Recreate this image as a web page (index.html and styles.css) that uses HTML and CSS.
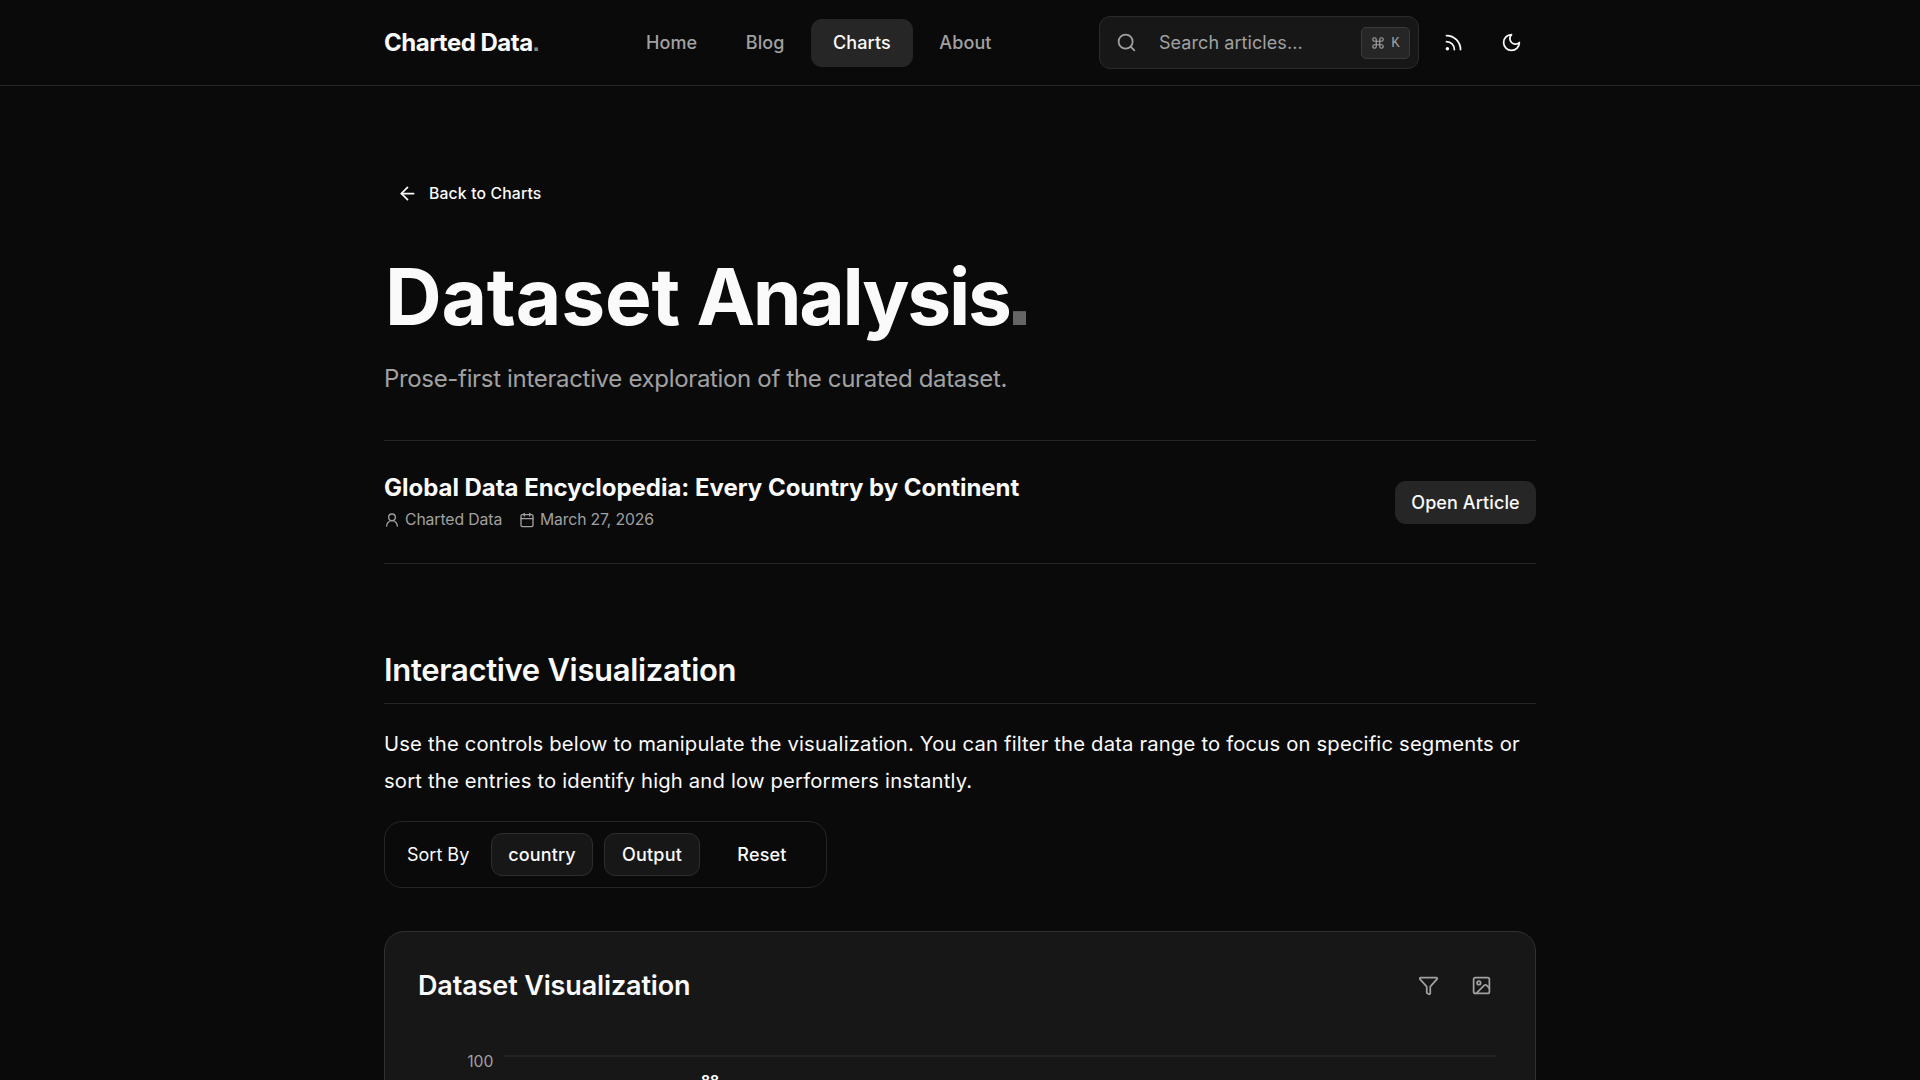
FILE: index.html
```html
<!DOCTYPE html>
<html lang="en">
<head>
    <meta charset="utf-8">
    <title>Dataset Analysis | Charted Data</title>
    <link rel="stylesheet" href="styles.css">
</head>
<body>
    <header class="header">
        <div class="header-inner">
            <a class="logo" href="#">Charted Data<span class="logo-dot">.</span></a>
            <nav class="nav">
                <a href="#">Home</a>
                <a href="#">Blog</a>
                <a href="#" class="active">Charts</a>
                <a href="#">About</a>
            </nav>
            <div class="actions">
                <div class="search">
                    <svg class="icon search-icon" viewBox="0 0 24 24"><circle cx="11" cy="11" r="8"/><path d="m21 21-4.3-4.3"/></svg>
                    <span class="search-text">Search articles...</span>
                    <kbd class="kbd">
                        <svg class="icon" viewBox="0 0 24 24"><path d="M15 6v12a3 3 0 1 0 3-3H6a3 3 0 1 0 3 3V6a3 3 0 1 0-3 3h12a3 3 0 1 0-3-3"/></svg>
                        <span>K</span>
                    </kbd>
                </div>
                <a class="icon-btn rss" href="#"><svg class="icon" viewBox="0 0 24 24"><path d="M4 11a9 9 0 0 1 9 9"/><path d="M4 4a16 16 0 0 1 16 16"/><circle cx="5" cy="19" r="1"/></svg></a>
                <a class="icon-btn moon" href="#"><svg class="icon" viewBox="0 0 24 24"><path d="M12 3a6 6 0 0 0 9 9 9 9 0 1 1-9-9Z"/></svg></a>
            </div>
        </div>
    </header>

    <main class="container">
        <a class="back" href="#">
            <svg class="icon" viewBox="0 0 24 24"><path d="m12 19-7-7 7-7"/><path d="M19 12H5"/></svg>
            <span>Back to Charts</span>
        </a>
        <h1>Dataset <span class="tight">Analysis</span><span class="dot">.</span></h1>
        <p class="subtitle">Prose-first interactive exploration of the curated dataset.</p>

        <section class="article">
            <div>
                <h3>Global Data Encyclopedia: Every Country by Continent</h3>
                <div class="meta">
                    <svg class="icon" viewBox="0 0 24 24"><circle cx="12" cy="8" r="5"/><path d="M20 21a8 8 0 0 0-16 0"/></svg>
                    <span class="author">Charted Data</span>
                    <svg class="icon" viewBox="0 0 24 24"><path d="M8 2v4"/><path d="M16 2v4"/><rect width="18" height="18" x="3" y="4" rx="2"/><path d="M3 10h18"/></svg>
                    <span class="date">March 27, 2026</span>
                </div>
            </div>
            <button class="open">Open Article</button>
        </section>

        <h2>Interactive Visualization</h2>
        <p class="intro">Use the controls below to manipulate the visualization. You can filter the data range to focus on specific segments or<br>sort the entries to identify high and low performers instantly.</p>

        <div class="sort">
            <span class="sort-label">Sort By</span>
            <button class="country">country</button>
            <button class="output">Output</button>
            <button class="reset">Reset</button>
        </div>

        <section class="card">
            <div class="card-head">
                <h3>Dataset Visualization</h3>
                <div class="card-tools">
                    <svg class="icon" viewBox="0 0 24 24"><path d="M10 20a1 1 0 0 0 .553.895l2 1A1 1 0 0 0 14 21v-7a2 2 0 0 1 .517-1.341L21.74 4.67A1 1 0 0 0 21 3H3a1 1 0 0 0-.742 1.67l7.225 7.989A2 2 0 0 1 10 14z"/></svg>
                    <svg class="icon" viewBox="0 0 24 24"><rect width="18" height="18" x="3" y="3" rx="2"/><circle cx="9" cy="9" r="2"/><path d="m21 15-3.086-3.086a2 2 0 0 0-2.828 0L6 21"/></svg>
                </div>
            </div>
            <svg class="chart" width="1080" height="300" viewBox="0 0 1080 300">
                <line class="grid" x1="86" y1="22" x2="1078.5" y2="22"/>
                <text class="tick" x="75.5" y="33" text-anchor="end">100</text>
                <text class="value" x="292" y="52" text-anchor="middle">88</text>
            </svg>
        </section>
    </main>
</body>
</html>
```
FILE: styles.css
```css
* {
    box-sizing: border-box;
}
html {
    font-size: 18px;
}
body {
    margin: 0;
    height: 1080px;
    overflow: hidden;
    background: #0a0a0a;
    color: #fafafa;
    font-family: Inter, "Liberation Sans", sans-serif;
}
a {
    color: inherit;
    text-decoration: none;
}
h1, h2, h3, p {
    margin: 0;
}
button {
    font-family: inherit;
    font-size: 18px;
    font-weight: 500;
    color: #fafafa;
    border: 0;
    padding: 0;
    white-space: nowrap;
}
.icon {
    display: block;
    flex: none;
    fill: none;
    stroke: currentColor;
    stroke-width: 2;
    stroke-linecap: round;
    stroke-linejoin: round;
}

.header {
    height: 86px;
    border-bottom: 1px solid #262626;
}
.header-inner {
    width: 1152px;
    height: 85px;
    margin: 0 auto;
    display: flex;
    align-items: center;
    white-space: nowrap;
}
.logo {
    width: 240px;
    font-size: 24px;
    font-weight: 700;
    letter-spacing: -0.5px;
}
.logo-dot {
    color: #8a8a8a;
    font-family: "Liberation Sans", sans-serif;
}
.nav {
    display: flex;
    gap: 4.5px;
    color: #a1a1a1;
    font-size: 18px;
    font-weight: 500;
    letter-spacing: 0.1px;
}
.nav a {
    height: 48px;
    padding: 0 22px;
    display: flex;
    align-items: center;
    border-radius: 11px;
}
.nav .active {
    background: #262626;
    color: #fafafa;
}
.actions {
    margin-left: auto;
    display: flex;
    align-items: center;
}
.search {
    width: 320px;
    height: 53px;
    border: 1px solid #2b2b2b;
    border-radius: 11px;
    background: #171717;
    color: #a1a1a1;
    display: flex;
    align-items: center;
    padding: 0 8px 0 16px;
}
.search-icon {
    width: 21px;
    height: 21px;
}
.search-text {
    margin-left: 22px;
    font-size: 18px;
    letter-spacing: 0.07px;
}
.kbd {
    width: 49px;
    height: 32px;
    margin-left: auto;
    border: 1px solid #3a3a3a;
    border-radius: 5px;
    background: #262626;
    font-family: "Liberation Mono", monospace;
    font-size: 14px;
    display: flex;
    align-items: center;
    justify-content: center;
    gap: 6px;
}
.kbd .icon {
    width: 14px;
    height: 14px;
}
.icon-btn {
    width: 48px;
    display: flex;
    justify-content: center;
}
.icon-btn .icon {
    width: 21px;
    height: 21px;
}
.rss {
    margin-left: 10px;
}
.moon {
    margin: 0 1px 0 10px;
}

.container {
    width: 1152px;
    margin: 0 auto;
}
.back {
    height: 40px;
    margin-top: 87px;
    padding-left: 13px;
    display: flex;
    align-items: center;
    gap: 11px;
    font-size: 15.75px;
    font-weight: 500;
    letter-spacing: 0.15px;
}
.back .icon {
    width: 21px;
    height: 21px;
}
h1 {
    height: 82px;
    margin: 43px 0 0 1px;
    font-size: 78.5px;
    line-height: 82px;
    font-weight: 700;
    letter-spacing: -0.2px;
    word-spacing: -2px;
    white-space: nowrap;
}
.tight {
    letter-spacing: -2.3px;
}
.dot {
    color: #656565;
    font-family: "Liberation Sans", sans-serif;
    font-size: 92px;
    line-height: 0;
    margin-left: -3px;
}
.subtitle {
    margin-top: 22px;
    height: 36px;
    line-height: 37px;
    font-size: 24px;
    letter-spacing: -0.33px;
    color: #a1a1a1;
    white-space: nowrap;
}

.article {
    margin-top: 44px;
    height: 124px;
    border-top: 1px solid #262626;
    border-bottom: 1px solid #262626;
    display: flex;
    align-items: center;
    justify-content: space-between;
    white-space: nowrap;
}
.article h3 {
    margin-top: -1px;
    font-size: 24px;
    line-height: 32px;
    font-weight: 700;
    letter-spacing: -0.03px;
}
.meta {
    margin-top: 5px;
    display: flex;
    align-items: center;
    font-size: 15.75px;
    line-height: 22px;
    letter-spacing: -0.15px;
    color: #a1a1a1;
}
.meta .icon {
    width: 16px;
    height: 16px;
}
.author {
    width: 97px;
    margin: 0 17px 0 5px;
    letter-spacing: -0.1px;
}
.date {
    margin-left: 5px;
}
.open {
    width: 141px;
    height: 43px;
    border-radius: 11px;
    background: #262626;
    letter-spacing: 0.1px;
}

h2 {
    margin-top: 84px;
    height: 56px;
    line-height: 44px;
    border-bottom: 1px solid #262626;
    font-size: 31px;
    font-weight: 600;
    letter-spacing: -0.32px;
}
.intro {
    margin-top: 21px;
    font-size: 20.25px;
    line-height: 37px;
    letter-spacing: 0.17px;
    white-space: nowrap;
}

.sort {
    width: 443px;
    height: 67px;
    margin-top: 22px;
    padding-left: 22px;
    border: 1px solid #262626;
    border-radius: 18px;
    display: flex;
    align-items: center;
    font-size: 18px;
    white-space: nowrap;
}
.sort-label {
    width: 84px;
}
.sort button {
    height: 43px;
    border: 1px solid #2e2e2e;
    border-radius: 11px;
    background: #171717;
    letter-spacing: 0.2px;
}
.sort .country {
    width: 102px;
    letter-spacing: 0.15px;
}
.sort .output {
    width: 96px;
    margin-left: 11px;
}
.sort .reset {
    width: 104px;
    margin-left: 10px;
    border-color: transparent;
    background: none;
}

.card {
    height: 600px;
    margin-top: 43px;
    border: 1px solid #303030;
    border-radius: 20px;
    background: #171717;
    padding: 32px 33px 0;
}
.card-head {
    display: flex;
    align-items: center;
    justify-content: space-between;
    height: 42px;
}
.card-head h3 {
    font-size: 27px;
    font-weight: 600;
    letter-spacing: -0.14px;
}
.card-tools {
    display: flex;
    gap: 32px;
    margin-right: 10px;
    color: #a1a1a1;
}
.card-tools .icon {
    width: 21px;
    height: 21px;
}
.chart {
    display: block;
    margin-top: 28px;
}
.grid {
    stroke: #222;
    stroke-width: 2;
}
.tick {
    fill: #a1a1a1;
    font-size: 15.75px;
}
.value {
    fill: #fafafa;
    font-size: 14px;
    font-weight: 700;
}
```
